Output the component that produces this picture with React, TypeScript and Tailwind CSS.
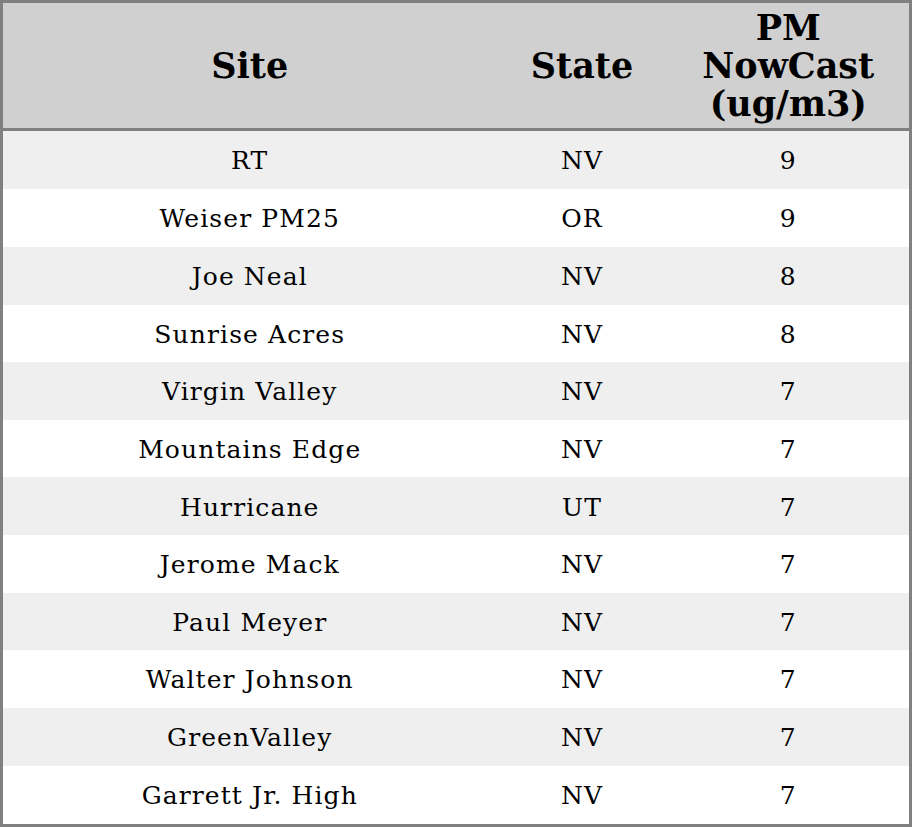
const rows: [string, string, number][] = [
  ["RT", "NV", 9],
  ["Weiser PM25", "OR", 9],
  ["Joe Neal", "NV", 8],
  ["Sunrise Acres", "NV", 8],
  ["Virgin Valley", "NV", 7],
  ["Mountains Edge", "NV", 7],
  ["Hurricane", "UT", 7],
  ["Jerome Mack", "NV", 7],
  ["Paul Meyer", "NV", 7],
  ["Walter Johnson", "NV", 7],
  ["GreenValley", "NV", 7],
  ["Garrett Jr. High", "NV", 7],
];

export default function App() {
  return (
    <div className="w-[912px] h-[827px] bg-white font-['DejaVu_Serif',serif] text-black">
      <table className="w-full h-full border-[3px] border-[#808080] border-collapse table-fixed">
        <colgroup>
          <col className="w-[495px]" />
          <col className="w-[171px]" />
          <col />
        </colgroup>
        <thead>
          <tr className="h-[128px] bg-[#d0d0d0] border-b-[3px] border-[#808080]">
            <th className="text-[35px] leading-[38px] font-bold text-center align-middle p-0">Site</th>
            <th className="text-[35px] leading-[38px] font-bold text-center align-middle p-0">State</th>
            <th className="text-[35px] leading-[38px] font-bold text-center align-middle p-0">
              PM
              <br />
              NowCast
              <br />
              (ug/m3)
            </th>
          </tr>
        </thead>
        <tbody>
          {rows.map(([site, state, value], i) => (
            <tr key={site} className={i % 2 === 0 ? "bg-[#efefef]" : "bg-white"}>
              <td className="text-[25px] tracking-[1.1px] text-center align-middle p-0 pt-[2px]">{site}</td>
              <td className="text-[25px] tracking-[1.1px] text-center align-middle p-0 pt-[2px]">{state}</td>
              <td className="text-[25px] tracking-[1.1px] text-center align-middle p-0 pt-[2px]">{value}</td>
            </tr>
          ))}
        </tbody>
      </table>
    </div>
  );
}
